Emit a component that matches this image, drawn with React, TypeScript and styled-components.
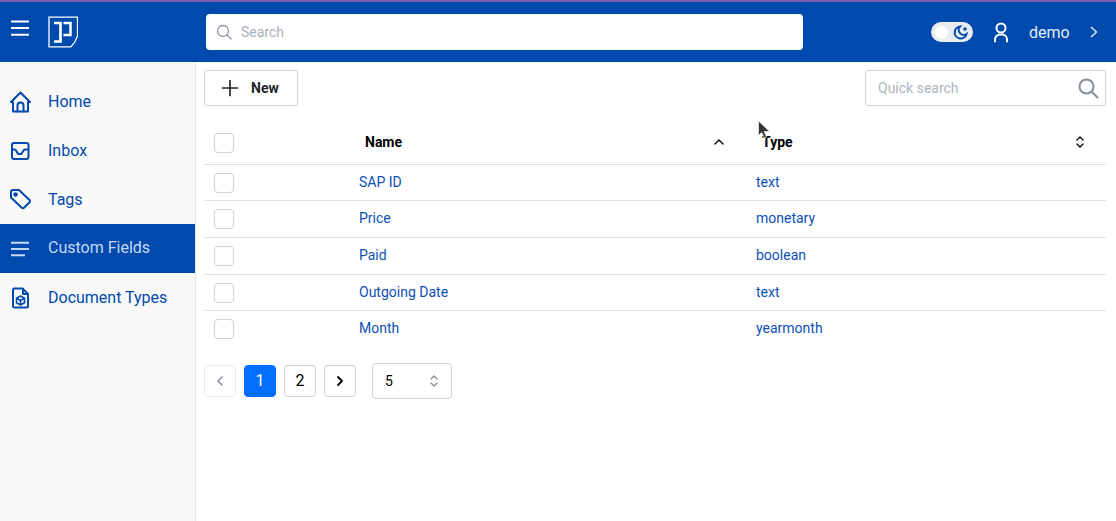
import styled, { createGlobalStyle } from "styled-components";

const GlobalStyle = createGlobalStyle`
  html, body {
    margin: 0;
    padding: 0;
    height: 100%;
    background: #fff;
    font-family: Roboto, "Liberation Sans", sans-serif;
    overflow: hidden;
  }
  * { box-sizing: border-box; }
`;

const Page = styled.div`
  position: relative;
  display: flex;
  flex-direction: column;
  width: 1116px;
  height: 521px;
`;

const Header = styled.header`
  display: flex;
  align-items: center;
  height: 62px;
  border-top: 2px solid #7d5bb3;
  background: #0049ad;
  color: #fff;
`;

const Brand = styled.div`
  display: flex;
  align-items: center;
  gap: 17px;
  width: 206px;
  padding-left: 10px;
  svg { display: block; }
`;

const Burger = styled.svg`
  margin-bottom: 9px;
`;

const SearchBox = styled.div`
  display: flex;
  align-items: center;
  gap: 9px;
  width: 597px;
  height: 36px;
  padding-left: 10px;
  border-radius: 4px;
  background: #fff;
  color: #a9afba;
  font-size: 14px;
`;

const UserArea = styled.div`
  display: flex;
  align-items: center;
  margin-left: 128px;
`;

const Toggle = styled.div`
  display: flex;
  align-items: center;
  justify-content: space-between;
  width: 42px;
  height: 20px;
  padding: 0 5px 0 4px;
  border-radius: 10px;
  background: #e9ecef;
`;

const Knob = styled.span`
  width: 13px;
  height: 13px;
  border-radius: 50%;
  background: #fff;
`;

const UserIcon = styled.svg`
  margin-left: 16px;
`;

const UserName = styled.span`
  margin: 0 19px 0 16px;
  font-size: 16px;
  color: #e4ecf7;
`;

const Body = styled.div`
  display: flex;
  flex: 1;
  min-height: 0;
`;

const Sidebar = styled.nav`
  width: 196px;
  padding-top: 15px;
  border-right: 1px solid #e6e6e6;
  background: #f9f9fa;
`;

const NavItem = styled.div<{ $active?: boolean }>`
  display: flex;
  align-items: center;
  gap: 14px;
  height: 49px;
  padding-left: 10px;
  padding-bottom: ${(p) => (p.$active ? "2px" : "0")};
  background: ${(p) => (p.$active ? "#0049ad" : "transparent")};
  color: ${(p) => (p.$active ? "#c5d9f5" : "#0049ad")};
  font-size: 16px;
  svg {
    flex: none;
    margin-top: ${(p) => (p.$active ? "3px" : "0")};
  }
`;

const Main = styled.main`
  flex: 1;
  padding: 8px 10px 0 8px;
`;

const Toolbar = styled.div`
  display: flex;
  align-items: center;
  justify-content: space-between;
  height: 36px;
`;

const NewButton = styled.button`
  display: flex;
  align-items: center;
  gap: 12px;
  width: 94px;
  height: 36px;
  padding: 0 0 0 16px;
  border: 1px solid #ced4da;
  border-radius: 3px;
  background: #fff;
  color: #212529;
  font: 700 14px Roboto, sans-serif;
`;

const QuickSearch = styled.div`
  display: flex;
  align-items: center;
  justify-content: space-between;
  width: 241px;
  height: 36px;
  padding: 0 6px 0 12px;
  border: 1px solid #ced4da;
  border-radius: 3px;
  color: #adb5bd;
  font-size: 14px;
`;

const Table = styled.div`
  margin-top: 18px;
`;

const Row = styled.div<{ $head?: boolean }>`
  display: grid;
  grid-template-columns: 155px 397px 1fr;
  align-items: center;
  height: ${(p) => (p.$head ? "40.6px" : "36.67px")};
  padding-bottom: ${(p) => (p.$head ? "3px" : "1.5px")};
  border-bottom: 1px solid #dee2e6;
  &:last-child { border-bottom-color: transparent; }
`;

const CheckCell = styled.div`
  display: flex;
  padding: 2px 0 0 10px;
`;

const Check = styled.span`
  width: 20px;
  height: 20px;
  border: 1px solid #ced4da;
  border-radius: 4px;
  background: #fff;
`;

const HeadCell = styled.div<{ $sortRight: number }>`
  display: flex;
  align-items: center;
  justify-content: space-between;
  padding: 0 ${(p) => p.$sortRight}px 0 6px;
  color: #000;
  font-size: 14px;
  font-weight: 700;
`;

const Cell = styled.div`
  color: #0d4fb8;
  font-size: 14px;
`;

const Pagination = styled.div`
  display: flex;
  align-items: center;
  gap: 8px;
  margin-top: 15px;
`;

const PageButton = styled.button<{ $active?: boolean; $disabled?: boolean }>`
  display: flex;
  align-items: center;
  justify-content: center;
  width: 32px;
  height: 32px;
  padding: 0;
  border: 1px solid ${(p) => (p.$active ? "#006fff" : p.$disabled ? "#e9ecef" : "#ced4da")};
  border-radius: 4px;
  background: ${(p) => (p.$active ? "#006fff" : "#fff")};
  color: ${(p) => (p.$active ? "#fff" : p.$disabled ? "#868e96" : "#000")};
  font: 400 16px Roboto, sans-serif;
`;

const PageSize = styled.div`
  display: flex;
  align-items: center;
  justify-content: space-between;
  width: 80px;
  height: 36px;
  margin-left: 8px;
  padding: 0 12px 0 12px;
  border: 1px solid #ced4da;
  border-radius: 4px;
  color: #000;
  font-size: 14px;
`;

const Pointer = styled.svg`
  position: absolute;
  left: 757px;
  top: 120px;
`;

const Stroke = { fill: "none", stroke: "currentColor", strokeLinecap: "round", strokeLinejoin: "round" } as const;

const Chevrons = ({ color }: { color: string }) => (
  <svg width="10" height="14" viewBox="0 0 10 14" {...Stroke} style={{ color }} strokeWidth="1.3">
    <path d="M2 5 5 2l3 3M2 9l3 3 3-3" />
  </svg>
);

const items = [
  {
    label: "Home",
    icon: (
      <svg width="24" height="24" viewBox="0 0 24 24" {...Stroke} strokeWidth="2">
        <path d="M1 12 10.500 2.500 20 12h-2v9.500H3V12z" />
        <path d="M7.500 21.500v-6a3 3 0 0 1 6 0v6" />
      </svg>
    ),
  },
  {
    label: "Inbox",
    icon: (
      <svg width="24" height="24" viewBox="0 0 24 24" {...Stroke} strokeWidth="2">
        <rect x="2" y="4" width="16.500" height="16" rx="2" />
        <path d="M2 10.500h2.500q1 0 1.500 1l1.500 2.500q.5 1 1.500 1h1.500q1 0 1.500-1l1.500-2.500q.5-1 1.500-1h2" />
      </svg>
    ),
  },
  {
    label: "Tags",
    icon: (
      <svg width="24" height="24" viewBox="0 0 24 24" {...Stroke} strokeWidth="2">
        <path d="M1 4A2 2 0 0 1 3 2h6l10.500 10a1.500 1.500 0 0 1 0 2.200l-5.500 5.500a1.500 1.500 0 0 1-2.200 0L1 9.500z" />
        <circle cx="5.500" cy="6.500" r="1.300" fill="currentColor" />
      </svg>
    ),
  },
  {
    label: "Custom Fields",
    icon: (
      <svg width="24" height="24" viewBox="0 0 24 24" {...Stroke} strokeWidth="2" strokeLinecap="butt">
        <path d="M1 5.700h18M1 12h18M1 18.300h14" />
      </svg>
    ),
  },
  {
    label: "Document Types",
    icon: (
      <svg width="24" height="24" viewBox="0 0 24 24" {...Stroke} strokeWidth="2">
        <path d="M4 2.500h8.500l5.500 5.500v12a1.500 1.500 0 0 1-1.500 1.500h-12A1.500 1.500 0 0 1 3 20V4a1.500 1.500 0 0 1 1-1.500z" />
        <path d="M13 3v5h5" />
        <path d="m10.500 10 4 2.200v4.600l-4 2.200-4-2.200v-4.600zM6.500 12.200l4 2.300 4-2.300M10.500 14.500V19" strokeWidth="1.600" />
      </svg>
    ),
  },
];

const fields = [
  { name: "SAP ID", type: "text" },
  { name: "Price", type: "monetary" },
  { name: "Paid", type: "boolean" },
  { name: "Outgoing Date", type: "text" },
  { name: "Month", type: "yearmonth" },
];

export default function App() {
  return (
    <Page>
      <GlobalStyle />
      <Header>
        <Brand>
          <Burger width="21" height="24" viewBox="0 0 21 24" {...Stroke} strokeWidth="2" strokeLinecap="butt">
            <path d="M1 5.500h18M1 12h18M1 18.800h18" />
          </Burger>
          <svg width="30" height="32" viewBox="0 0 30 32" fill="none" stroke="#fff">
            <path d="M1 1.200h28.500v18.800q-2 6.500-6.500 10.800H1z" strokeWidth="1.300" />
            <path d="M6 7h6.500v18.500H6" strokeWidth="2.700" />
            <path d="M15.500 7h7v12h-7" strokeWidth="2.500" />
          </svg>
        </Brand>
        <SearchBox>
          <svg width="16" height="16" viewBox="0 0 16 16" fill="none" stroke="#8d949e" strokeWidth="1.300" strokeLinecap="round">
            <circle cx="7" cy="7" r="5.500" />
            <path d="m11 11 4 4" />
          </svg>
          Search
        </SearchBox>
        <UserArea>
          <Toggle>
            <Knob />
            <svg width="15" height="15" viewBox="0 0 15 15" fill="none" stroke="#0049ad" strokeWidth="2" strokeLinecap="round">
              <path d="M7 1.500a6 6 0 1 0 6.500 7.500A5 5 0 0 1 7 1.500z" />
              <path d="M12 2.500v3M10.500 4h3" strokeWidth="1.300" />
            </svg>
          </Toggle>
          <UserIcon width="24" height="24" viewBox="0 0 24 24" fill="none" stroke="#fff" strokeWidth="2" strokeLinecap="round">
            <circle cx="12" cy="8" r="4.500" />
            <path d="M6 21.500v-2a5 5 0 0 1 5-5h2a5 5 0 0 1 5 5v2" />
          </UserIcon>
          <UserName>demo</UserName>
          <svg width="10" height="14" viewBox="0 0 10 14" fill="none" stroke="#e4ecf7" strokeWidth="1.500" strokeLinecap="round" strokeLinejoin="round">
            <path d="m2.500 2.500 5 4.500-5 4.500" />
          </svg>
        </UserArea>
      </Header>
      <Body>
        <Sidebar>
          {items.map((item) => (
            <NavItem key={item.label} $active={item.label === "Custom Fields"}>
              {item.icon}
              {item.label}
            </NavItem>
          ))}
        </Sidebar>
        <Main>
          <Toolbar>
            <NewButton>
              <svg width="18" height="18" viewBox="0 0 18 18" stroke="#212529" strokeWidth="1.700" strokeLinecap="round">
                <path d="M9 1.500v15M1.500 9h15" />
              </svg>
              New
            </NewButton>
            <QuickSearch>
              Quick search
              <svg width="22" height="22" viewBox="0 0 22 22" fill="none" stroke="#868e96" strokeWidth="2" strokeLinecap="round">
                <circle cx="9.500" cy="9.500" r="7" />
                <path d="m15 15 5.500 5.500" />
              </svg>
            </QuickSearch>
          </Toolbar>
          <Table>
            <Row $head>
              <CheckCell><Check /></CheckCell>
              <HeadCell $sortRight={31}>
                Name
                <svg width="12" height="8" viewBox="0 0 12 8" fill="none" stroke="#000" strokeWidth="1.400" strokeLinecap="round" strokeLinejoin="round">
                  <path d="m2 6 4-4 4 4" />
                </svg>
              </HeadCell>
              <HeadCell $sortRight={21}>
                Type
                <Chevrons color="#000" />
              </HeadCell>
            </Row>
            {fields.map((field) => (
              <Row key={field.name}>
                <CheckCell><Check /></CheckCell>
                <Cell>{field.name}</Cell>
                <Cell>{field.type}</Cell>
              </Row>
            ))}
          </Table>
          <Pagination>
            <PageButton $disabled>
              <svg width="10" height="12" viewBox="0 0 10 12" fill="none" stroke="currentColor" strokeWidth="1.500" strokeLinecap="round" strokeLinejoin="round">
                <path d="M7 2 3 6l4 4" />
              </svg>
            </PageButton>
            <PageButton $active>1</PageButton>
            <PageButton>2</PageButton>
            <PageButton>
              <svg width="10" height="12" viewBox="0 0 10 12" fill="none" stroke="currentColor" strokeWidth="1.800" strokeLinecap="round" strokeLinejoin="round">
                <path d="m3 2 4 4-4 4" />
              </svg>
            </PageButton>
            <PageSize>
              5
              <Chevrons color="#868e96" />
            </PageSize>
          </Pagination>
        </Main>
      </Body>
      <Pointer width="15" height="20" viewBox="0 0 15 20">
        <path d="M1.500 1v14.500l3.200-3 2.600 5.500 2.400-1-2.600-5.500h5.400z" fill="#333" stroke="#e8e8e8" strokeWidth="0.800" />
      </Pointer>
    </Page>
  );
}
